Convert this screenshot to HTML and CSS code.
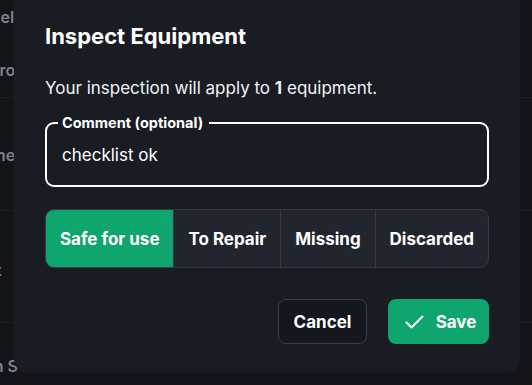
FILE: index.html
```html
<!DOCTYPE html>
<html lang="en">
<head>
<meta charset="utf-8">
<link rel="stylesheet" href="styles.css">
</head>
<body>
<div class="backdrop">
  <div class="row r1"><span class="cell c1">Model</span><span class="cell c2">Gyro</span></div>
  <div class="row r2"><span class="cell">Name</span></div>
  <div class="row r3"><span class="cell">t</span></div>
  <div class="row r4"><span class="cell">Open S</span></div>
</div>
<div class="dialog">
  <h2 class="title">Inspect Equipment</h2>
  <p class="intro">Your inspection will apply to <b>1</b> equipment.</p>
  <div class="field">
    <span class="legend">Comment (optional)</span>
    <div class="value">checklist ok</div>
  </div>
  <div class="segments">
    <button class="seg active">Safe for use</button>
    <button class="seg">To Repair</button>
    <button class="seg">Missing</button>
    <button class="seg">Discarded</button>
  </div>
  <div class="actions">
    <button class="btn cancel">Cancel</button>
    <button class="btn save"><svg class="check" width="19" height="14" viewBox="0 0 19 14"><path d="M1.5 7.5 L6.5 12.5 L17.5 1.5" fill="none" stroke="#fff" stroke-width="2" stroke-linecap="round" stroke-linejoin="round"/></svg><span>Save</span></button>
  </div>
</div>
</body>
</html>
```
FILE: styles.css
```css
* { box-sizing: border-box; }
html, body {
  margin: 0;
  padding: 0;
  width: 532px;
  height: 385px;
  overflow: hidden;
  background: #121419;
  font-family: Inter, "Noto Sans", sans-serif;
  color: #ffffff;
}
.backdrop {
  display: flex;
  flex-direction: column;
  width: 532px;
  height: 385px;
}
.row {
  border-bottom: 1px solid #1c1f25;
  color: #7f8288;
  font-size: 16px;
  font-weight: 600;
  line-height: 20px;
}
.cell { display: block; }
.r1 { height: 98px; padding-top: 7px; }
.r1 .c1 { margin-left: -34px; }
.r1 .c2 { margin-left: -22px; margin-top: 33px; }
.r2 { height: 113px; padding-top: 47px; }
.r2 .cell { margin-left: -30px; }
.r3 { height: 112px; padding-top: 49px; }
.r3 .cell { margin-left: -4px; }
.r4 { flex: 1; padding-top: 33px; border-bottom: none; }
.r4 .cell { margin-left: -38px; }
.dialog {
  position: absolute;
  left: 14px;
  top: -20px;
  width: 506px;
  height: 393px;
  background: #191c23;
  border-radius: 14px;
  padding: 42px 31px 0 31px;
}
.title {
  margin: 0;
  font-size: 22px;
  font-weight: 700;
  line-height: 28px;
}
.intro {
  margin: 26px 0 0 0;
  font-size: 17px;
  line-height: 24px;
  color: #f2f3f5;
}
.intro b { font-weight: 700; }
.field {
  position: relative;
  margin-top: 22px;
  height: 65px;
  border: 2px solid #ffffff;
  border-radius: 9px;
  padding: 19px 13px 0 15px;
}
.legend {
  position: absolute;
  left: 11px;
  top: -10px;
  padding: 0 6px 0 4px;
  background: #191c23;
  font-size: 14.5px;
  font-weight: 700;
  line-height: 18px;
}
.value {
  font-size: 17px;
  line-height: 24px;
}
.segments {
  display: flex;
  margin-top: 22px;
  height: 59px;
  border: 1px solid #353a42;
  border-radius: 9px;
  overflow: hidden;
  background: #21252d;
}
.seg {
  flex: 1 1 auto;
  border: none;
  border-left: 1px solid #353a42;
  background: transparent;
  color: #ffffff;
  font-family: inherit;
  font-size: 17px;
  font-weight: 700;
  padding: 0 8px;
}
.seg:first-child { border-left: none; }
.seg.active { background: #0ea56f; }
.actions {
  display: flex;
  justify-content: flex-end;
  gap: 21px;
  margin-top: 31px;
}
.btn {
  height: 45px;
  border-radius: 8px;
  font-family: inherit;
  font-size: 17px;
  font-weight: 700;
  color: #ffffff;
  display: flex;
  align-items: center;
  justify-content: center;
}
.cancel {
  width: 89px;
  background: #14171d;
  border: 1px solid #3a3e46;
}
.save {
  width: 101px;
  background: #0ea56f;
  border: none;
  gap: 12px;
  padding-right: 2px;
}
.check { display: block; }
```
